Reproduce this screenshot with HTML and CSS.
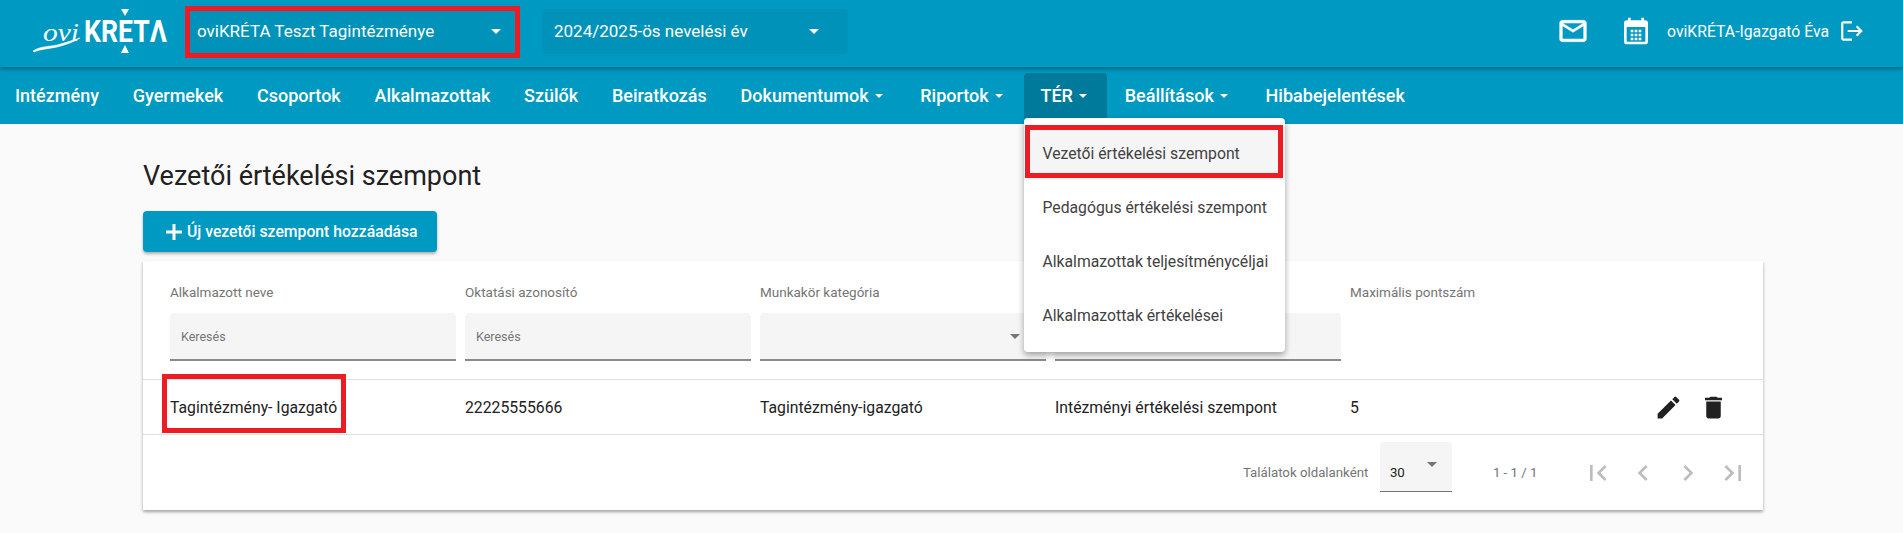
FILE: index.html
```html
<!DOCTYPE html>
<html lang="hu">
<head>
  <meta charset="UTF-8">
  <meta name="viewport" content="width=device-width, initial-scale=1.0">
  <title>Vezetői értékelési szempont</title>
  <link rel="stylesheet" href="styles.css">
</head>
<body>
  <header class="topbar">
    <svg class="logo" viewBox="0 0 134 44" aria-label="oviKRÉTA">
      <polygon points="88,0 96,0 92,7" fill="#fff"/>
      <polygon points="92,36 96,44 88,44" fill="#fff"/>
      <text x="10" y="32" class="logo-ovi" textLength="36" lengthAdjust="spacingAndGlyphs">ovi</text>
      <path d="M0 42 C8 37 14 38 24 36 C32 34 40 31 47 29 C41 33 32 36 24 38 C14 40 8 40 1 43 z" fill="#fff" stroke="#fff" stroke-width="0.6"/>
      <text x="51" y="33" class="logo-kreta" textLength="83" lengthAdjust="spacingAndGlyphs">KRETΛ</text>
    </svg>

    <div class="school-select school-select-first">
      <span>oviKRÉTA Teszt Tagintézménye</span>
      <i class="arrow"></i>
    </div>
    <div class="school-select school-select-year">
      <span>2024/2025-ös nevelési év</span>
      <i class="arrow"></i>
    </div>

    <div class="user-box">
      <svg class="icon-mail" viewBox="0 0 24 24"><path d="M20 4H4c-1.1 0-1.99.9-1.99 2L2 18c0 1.1.9 2 2 2h16c1.1 0 2-.9 2-2V6c0-1.1-.9-2-2-2zm0 14H4V8l8 5 8-5v10zm-8-7L4 6h16l-8 5z"/></svg>
      <svg class="icon-calendar" viewBox="0 0 24 24"><path d="M19 4h-1V2h-2v2H8V2H6v2H5c-1.1 0-2 .9-2 2v14c0 1.1.9 2 2 2h14c1.1 0 2-.9 2-2V6c0-1.1-.9-2-2-2zm0 16H5V9h14v11zM8 11h2v2H8zm3 0h2v2h-2zm3 0h2v2h-2zM8 14h2v2H8zm3 0h2v2h-2zm3 0h2v2h-2zM8 17h2v2H8zm3 0h2v2h-2zm3 0h2v2h-2z"/></svg>
      <span class="user-name">oviKRÉTA-Igazgató Éva</span>
      <svg class="icon-logout" viewBox="0 0 24 24"><path d="M17 7l-1.41 1.41L18.17 11H8v2h10.17l-2.58 2.58L17 17l5-5zM4 5h8V3H4c-1.1 0-2 .9-2 2v14c0 1.1.9 2 2 2h8v-2H4V5z"/></svg>
    </div>
  </header>

  <nav class="menu">
    <a class="menu-item">Intézmény</a>
    <a class="menu-item">Gyermekek</a>
    <a class="menu-item">Csoportok</a>
    <a class="menu-item">Alkalmazottak</a>
    <a class="menu-item">Szülők</a>
    <a class="menu-item">Beiratkozás</a>
    <a class="menu-item">Dokumentumok<i class="caret"></i></a>
    <a class="menu-item">Riportok<i class="caret"></i></a>
    <div class="menu-wrap">
      <a class="menu-item active">TÉR<i class="caret"></i></a>
      <ul class="dropdown">
        <li class="selected">Vezetői értékelési szempont</li>
        <li>Pedagógus értékelési szempont</li>
        <li>Alkalmazottak teljesítménycéljai</li>
        <li>Alkalmazottak értékelései</li>
      </ul>
    </div>
    <a class="menu-item">Beállítások<i class="caret"></i></a>
    <a class="menu-item">Hibabejelentések</a>
  </nav>

  <main class="content">
    <h1>Vezetői értékelési szempont</h1>
    <button class="add-btn">
      <svg viewBox="0 0 18 18"><path d="M7.5 1h3v6.5H17v3h-6.5V17h-3v-6.5H1v-3h6.5z"/></svg>
      Új vezetői szempont hozzáadása
    </button>

    <section class="card">
      <div class="grid head-row">
        <div class="col">
          <label>Alkalmazott neve</label>
          <div class="filter">Keresés</div>
        </div>
        <div class="col">
          <label>Oktatási azonosító</label>
          <div class="filter">Keresés</div>
        </div>
        <div class="col">
          <label>Munkakör kategória</label>
          <div class="filter"><i class="arrow arrow-grey"></i></div>
        </div>
        <div class="col">
          <label>Értékelési szempont</label>
          <div class="filter"></div>
        </div>
        <div class="col">
          <label>Maximális pontszám</label>
        </div>
      </div>

      <div class="grid data-row">
        <div>Tagintézmény- Igazgató</div>
        <div>22225555666</div>
        <div>Tagintézmény-igazgató</div>
        <div>Intézményi értékelési szempont</div>
        <div>5</div>
        <div class="row-actions">
          <svg viewBox="0 0 24 24"><path d="M3 17.25V21h3.75L17.81 9.94l-3.75-3.75L3 17.25zM20.71 7.04a1 1 0 0 0 0-1.41l-2.34-2.34a1 1 0 0 0-1.41 0l-1.83 1.83 3.75 3.75 1.83-1.83z"/></svg>
          <svg viewBox="0 0 24 24"><path d="M6 19c0 1.1.9 2 2 2h8c1.1 0 2-.9 2-2V7H6v12zM19 4h-3.5l-1-1h-5l-1 1H5v2h14V4z"/></svg>
        </div>
      </div>

      <div class="pager">
        <span class="pager-label">Találatok oldalanként</span>
        <div class="pager-select">30<i class="arrow arrow-grey"></i></div>
        <span class="pager-range">1 - 1 / 1</span>
        <div class="pager-btns">
          <svg viewBox="0 0 24 24"><path d="M18.41 16.59L13.82 12l4.59-4.59L17 6l-6 6 6 6zM6 6h2v12H6z"/></svg>
          <svg viewBox="0 0 24 24"><path d="M15.41 7.41L14 6l-6 6 6 6 1.41-1.41L10.83 12z"/></svg>
          <svg viewBox="0 0 24 24"><path d="M10 6L8.59 7.41 13.17 12l-4.58 4.59L10 18l6-6z"/></svg>
          <svg viewBox="0 0 24 24"><path d="M5.59 7.41L10.18 12l-4.59 4.59L7 18l6-6-6-6zM16 6h2v12h-2z"/></svg>
        </div>
      </div>
    </section>
  </main>

  <!-- red markers of the guide screenshot -->
  <div class="marker marker-school"></div>
  <div class="marker marker-menu"></div>
  <div class="marker marker-name"></div>
</body>
</html>
```

FILE: styles.css
```css
* {
  box-sizing: border-box;
}

body {
  margin: 0;
  min-height: 533px;
  background-color: #fafafa;
  font-family: 'Roboto', sans-serif;
  color: #212121;
  overflow: hidden;
  position: relative;
}

/* top bar */
.topbar {
  display: flex;
  align-items: center;
  height: 67px;
  padding: 0 38px 5px 33px;
  background-color: #0099c2;
  color: #fff;
  box-shadow: 0 2px 4px rgba(0, 0, 0, 0.35);
  position: relative;
  z-index: 2;
}

.logo {
  width: 134px;
  height: 44px;
  margin-right: 18px;
  flex-shrink: 0;
  overflow: visible;
}

.logo-ovi {
  font-family: 'Liberation Serif', serif;
  font-style: italic;
  font-size: 25px;
  fill: #fff;
}

.logo-kreta {
  font-family: 'Roboto', sans-serif;
  font-weight: 700;
  font-size: 31px;
  fill: #fff;
}

.school-select {
  display: flex;
  align-items: center;
  justify-content: space-between;
  height: 45px;
  padding: 0 12px;
  border-radius: 4px;
  background-color: #0092b8;
  font-size: 17px;
}

.school-select-first {
  width: 334px;
  margin-right: 23px;
  padding-right: 18px;
}

.school-select-year {
  width: 306px;
  padding-right: 29px;
}

.arrow {
  display: block;
  width: 0;
  height: 0;
  border-left: 5px solid transparent;
  border-right: 5px solid transparent;
  border-top: 5px solid #fff;
}

.arrow-grey {
  border-top-color: #757575;
}

.user-box {
  display: flex;
  align-items: center;
  margin-left: auto;
}

.user-box svg {
  fill: #fff;
  display: block;
}

.icon-mail {
  width: 32px;
  height: 32px;
  margin-right: 31px;
}

.icon-mail path {
  stroke: #fff;
  stroke-width: 0.4;
}

.icon-calendar {
  width: 32px;
  height: 32px;
  margin-right: 15px;
}

.user-name {
  font-size: 15.75px;
  margin-right: 10px;
}

.icon-logout {
  width: 26px;
  height: 26px;
}

/* menu */
.menu {
  display: flex;
  align-items: flex-end;
  gap: 1.75px;
  height: 57px;
  padding-bottom: 6px;
  margin-left: -1px;
  background-color: #0099c2;
  color: #fff;
  box-shadow: 1px 0 0 #0099c2;
}

.menu-item {
  display: flex;
  align-items: center;
  height: 45px;
  padding: 0 16px;
  font-size: 18px;
  font-weight: 500;
  border-radius: 4px 4px 0 0;
}

.menu-wrap {
  position: relative;
}

.menu-item.active {
  background-color: #007a9b;
}

.caret {
  display: block;
  margin: 0 4px 0 6px;
  width: 0;
  height: 0;
  border-left: 4px solid transparent;
  border-right: 4px solid transparent;
  border-top: 4px solid #fff;
}

.dropdown {
  position: absolute;
  top: 45px;
  left: 0;
  z-index: 3;
  width: 261px;
  margin: 0;
  padding: 8px 0 10px;
  list-style: none;
  background-color: #fff;
  border-radius: 4px;
  color: #424242;
  font-size: 15.75px;
  box-shadow: 0 3px 6px rgba(0, 0, 0, 0.35);
}

.dropdown li {
  display: flex;
  align-items: center;
  height: 54px;
  padding: 0 18px;
  white-space: nowrap;
}

.dropdown .selected {
  background-color: #f5f5f5;
}

/* content */
.content {
  padding: 0 140px 0 143px;
}

h1 {
  margin: 35px 0 17px;
  font-size: 27px;
  line-height: 35px;
  font-weight: 400;
}

.add-btn {
  display: flex;
  align-items: center;
  gap: 4px;
  height: 41px;
  padding: 0 19px 0 22px;
  border: 0;
  border-radius: 4px;
  background-color: #0099c2;
  color: #fff;
  font-family: inherit;
  font-size: 15.75px;
  font-weight: 500;
  box-shadow: 0 2px 3px rgba(0, 0, 0, 0.3);
}

.add-btn svg {
  width: 18px;
  height: 18px;
  fill: #fff;
}

.card {
  margin-top: 9px;
  background-color: #fff;
  box-shadow: 0 2px 3px rgba(0, 0, 0, 0.35);
}

.grid {
  display: grid;
  grid-template-columns: repeat(4, 286px) 1fr;
  column-gap: 9px;
  padding-left: 27px;
}

.head-row {
  height: 119px;
  padding-top: 22px;
  border-bottom: 1px solid #e0e0e0;
}

label {
  display: block;
  font-size: 13.5px;
  line-height: 18px;
  color: #757575;
  margin-bottom: 12px;
}

.filter {
  display: flex;
  align-items: center;
  justify-content: flex-end;
  height: 48px;
  padding: 0 11px;
  border-radius: 4px 4px 0 0;
  border-bottom: 2px solid #8a8a8a;
  background-color: #f5f5f5;
  font-size: 12.5px;
  color: #757575;
}

.filter:not(:empty) {
  justify-content: flex-start;
}

.filter .arrow {
  margin-left: auto;
  margin-right: 15px;
}

.data-row {
  grid-template-columns: repeat(4, 286px) 1fr 100px;
  align-items: center;
  height: 55px;
  font-size: 15.75px;
  border-bottom: 1px solid #e0e0e0;
}

.row-actions {
  display: flex;
  gap: 16px;
  margin-left: -9px;
}

.row-actions svg {
  width: 29px;
  height: 29px;
  fill: #212121;
}

.pager {
  display: flex;
  align-items: center;
  justify-content: flex-end;
  height: 75px;
  padding-right: 10px;
  font-size: 13.25px;
  color: #757575;
}

.pager-label {
  margin-right: 11.5px;
}

.pager-select {
  position: relative;
  display: flex;
  align-items: center;
  width: 72px;
  height: 50px;
  margin-bottom: 11px;
  padding: 12px 0 0 10px;
  border-radius: 4px 4px 0 0;
  border-bottom: 1px solid #757575;
  background-color: #f5f5f5;
  color: #212121;
}

.pager-select .arrow {
  position: absolute;
  top: 20px;
  right: 15px;
}

.pager-range {
  margin-left: 41px;
  margin-right: 40.5px;
}

.pager-btns {
  display: flex;
  gap: 5px;
}

.pager-btns svg {
  width: 40px;
  height: 40px;
  padding: 4px;
  fill: #bdbdbd;
}

/* red markers */
.marker {
  position: absolute;
  border: 5px solid #ed1c24;
  z-index: 4;
}

.marker-school {
  left: 185px;
  top: 6px;
  width: 335px;
  height: 52px;
}

.marker-menu {
  left: 1025px;
  top: 125px;
  width: 258px;
  height: 53px;
}

.marker-name {
  left: 162px;
  top: 374px;
  width: 184px;
  height: 59px;
}
```
